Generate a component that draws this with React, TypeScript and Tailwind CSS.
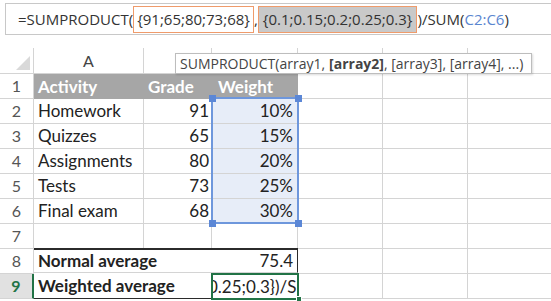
import React from 'react'

const rows = [
  { n: 2, a: 'Homework', b: '91', c: '10%' },
  { n: 3, a: 'Quizzes', b: '65', c: '15%' },
  { n: 4, a: 'Assignments', b: '80', c: '20%' },
  { n: 5, a: 'Tests', b: '73', c: '25%' },
  { n: 6, a: 'Final exam', b: '68', c: '30%' },
]

const rowHead = 'h-[25px] border-r border-b border-[#d4d4d4] flex items-center justify-center text-[16px] text-[#555]'
const cell = 'h-[25px] border-r border-b border-[#d4d4d4] flex items-center px-[4px] text-[17px] text-[#222] whitespace-nowrap overflow-hidden'
const num = 'h-[25px] border-r border-b border-[#d4d4d4] flex items-center justify-end pr-[2px] text-[17px] text-[#222] whitespace-nowrap overflow-hidden'

const Empty = () => (
  <>
    <div className={cell}></div>
    <div className={cell}></div>
    <div className={cell}></div>
  </>
)

export default function App() {
  return (
    <div className="relative w-[551px] h-[301px] overflow-hidden bg-white font-['Lato',sans-serif]">
      {/* formula bar */}
      <div className="mt-[3px] ml-[5px] h-[32px] border border-r-0 border-[#c8c8c8] flex items-center pl-[12px] font-['Open_Sans',sans-serif] text-[15px] text-[#333] whitespace-nowrap">
        <span>=SUMPRODUCT(</span>
        <span className="h-[27px] flex items-center border border-[#ef9b6b] px-[3px]">{'{91;65;80;73;68}'}</span>
        <span>,</span>
        <span className="h-[27px] flex items-center border border-[#ef9b6b] bg-[#c9c9c9] px-[4px]">{'{0.1;0.15;0.2;0.25;0.3}'}</span>
        <span>)/SUM(</span>
        <span className="text-[#5a86d0]">C2:C6</span>
        <span>)</span>
      </div>

      <div className="mt-[13px] grid grid-cols-[34px_110px_68px_86px_85px_85px_85px]">
        {/* column headers */}
        <div className="h-[26px] border-r border-b border-[#d4d4d4] flex items-end justify-end pr-[3px] pb-[3px]">
          <svg width="14" height="14" viewBox="0 0 14 14">
            <path d="M14 0 L14 14 L0 14 Z" fill="#d9d9d9" />
          </svg>
        </div>
        <div className="h-[26px] border-r border-b border-[#d4d4d4] flex items-center justify-center text-[16px] text-[#444]">A</div>
        {[1, 2, 3, 4, 5].map((i) => (
          <div key={i} className="h-[26px] border-r border-b border-[#d4d4d4]"></div>
        ))}

        {/* row 1 */}
        <div className={rowHead}>1</div>
        <div className="h-[25px] bg-[#a6a6a6] flex items-center px-[4px] text-[17px] font-bold text-white">Activity</div>
        <div className="h-[25px] bg-[#a6a6a6] flex items-center px-[4px] text-[17px] font-bold text-white">Grade</div>
        <div className="h-[25px] bg-[#a6a6a6] flex items-center px-[6px] text-[17px] font-bold text-white">Weight</div>
        <Empty />

        {rows.map((r) => (
          <React.Fragment key={r.n}>
            <div className={rowHead}>{r.n}</div>
            <div className={cell}>{r.a}</div>
            <div className={num}>{r.b}</div>
            <div className={num + ' pr-[4px] bg-[#e7edf8]'}>{r.c}</div>
            <Empty />
          </React.Fragment>
        ))}

        {/* row 7 */}
        <div className={rowHead}>7</div>
        <div className={cell}></div>
        <div className={cell}></div>
        <div className={cell}></div>
        <Empty />

        {/* row 8 */}
        <div className={rowHead}>8</div>
        <div className="col-span-2 h-[25px] border-t-2 border-b border-[#2b2b2b] border-b-[#d4d4d4] -mt-px flex items-center px-[4px] text-[17px] font-bold text-[#222]">
          Normal average
        </div>
        <div className="h-[25px] border-t-2 border-r border-b border-[#2b2b2b] border-b-[#d4d4d4] -mt-px flex items-center justify-end px-[4px] text-[17px] text-[#222]">
          75.4
        </div>
        <Empty />

        {/* row 9 */}
        <div className="h-[25px] bg-[#e1e1e1] border-r-2 border-b border-r-[#217346] border-b-[#d4d4d4] flex items-center justify-center text-[16px] font-bold text-[#217346]">
          9
        </div>
        <div className="col-span-2 h-[25px] border-b border-[#2b2b2b] flex items-center px-[4px] text-[17px] font-bold text-[#222]">
          Weighted average
        </div>
        <div className="relative h-[25px] border-b border-[#2b2b2b] overflow-visible">
          <div className="absolute -left-px -top-px w-[88px] h-[27px] border-2 border-[#217346] overflow-hidden flex items-center text-[17px] text-[#222] whitespace-nowrap">
            <span className="ml-[-5px]">0.25;0.3{'}'})/SUM(</span>
          </div>
          <div className="absolute right-[-4px] bottom-[-4px] w-[6px] h-[6px] bg-[#217346] border border-white"></div>
        </div>
        <Empty />
      </div>

      {/* reference selection C2:C6 */}
      <div className="absolute left-[211px] top-[97px] w-[88px] h-[127px] border-2 border-[#6e97dc]"></div>
      <div className="absolute left-[209px] top-[95px] w-[7px] h-[7px] bg-[#5b87d6]"></div>
      <div className="absolute left-[295px] top-[95px] w-[7px] h-[7px] bg-[#5b87d6]"></div>
      <div className="absolute left-[209px] top-[220px] w-[7px] h-[7px] bg-[#5b87d6]"></div>
      <div className="absolute left-[295px] top-[220px] w-[7px] h-[7px] bg-[#5b87d6]"></div>

      {/* function tooltip */}
      <div className="absolute left-[175px] top-[53px] w-[357px] h-[21px] bg-white border border-[#bdbdbd] shadow-[1px_1px_2px_rgba(0,0,0,0.15)] flex items-center px-[4px] font-['Open_Sans',sans-serif] text-[14px] text-[#444] whitespace-nowrap">
        SUMPRODUCT(array1, <span className="font-bold ml-[4px]">[array2]</span>, [array3], [array4], ...)
      </div>
    </div>
  )
}
